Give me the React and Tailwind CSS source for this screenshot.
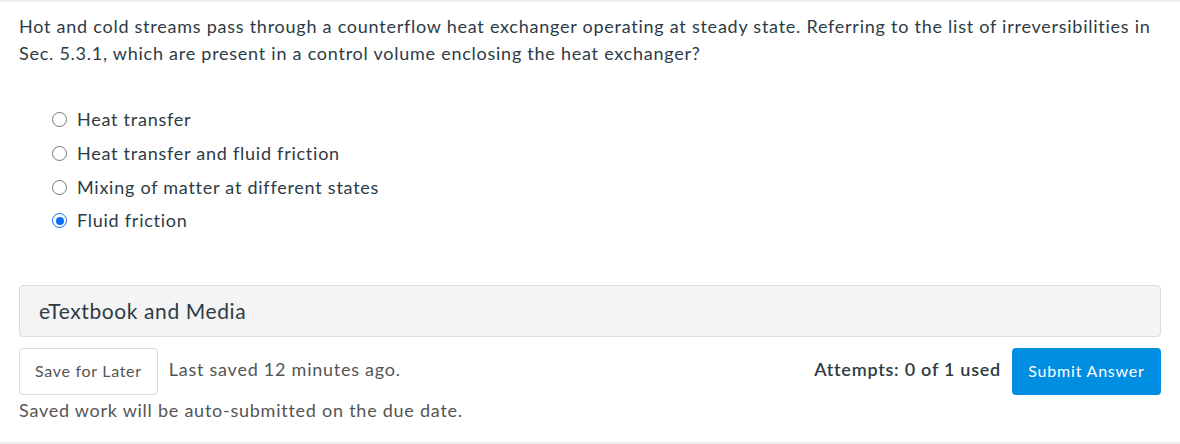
import React from 'react';

const options = [
    'Heat transfer',
    'Heat transfer and fluid friction',
    'Mixing of matter at different states',
    'Fluid friction',
];

const Radio = ({ checked }) =>
    checked ? (
        <span className="flex h-[15px] w-[15px] items-center justify-center rounded-full border-[1.5px] border-[#0a6ef5] bg-white">
            <span className="h-[8px] w-[8px] rounded-full bg-[#0a6ef5]" />
        </span>
    ) : (
        <span className="h-[15px] w-[15px] rounded-full border border-[#767676] bg-white" />
    );

export default function App() {
    return (
        <div className="h-[444px] w-[1180px] border-y-2 border-[#ececec] bg-white font-['Lato','Liberation_Sans',sans-serif] tracking-[0.75px] text-[#2d3b45]">
            {/* Question */}
            <div className="px-[19px] pt-[11px]">
                <p className="text-[18px] leading-[27px]">
                    Hot and cold streams pass through a counterflow heat exchanger operating at steady state. Referring to the list of irreversibilities in Sec. 5.3.1, which are present in a control volume enclosing the heat exchanger?
                </p>

                <div className="mt-[36px] flex flex-col pl-[33px]">
                    {options.map((o, i) => (
                        <label key={o} className="flex h-[33.7px] items-center gap-[10px] text-[18px]">
                            <Radio checked={i === 3} />
                            <span>{o}</span>
                        </label>
                    ))}
                </div>

                {/* Media panel */}
                <div className="mt-[47px] flex h-[52px] items-center rounded border border-[#dcdcdc] bg-[#f4f4f4] px-[19px] text-[21px] tracking-[0.6px] text-[#2d3b45]">
                    eTextbook and Media
                </div>

                {/* Actions */}
                <div className="mt-[11px] flex items-start justify-between">
                    <div className="flex items-start">
                        <button className="h-[47px] rounded border border-[#dcdcdc] bg-white px-[15px] text-[16px] tracking-[0.7px] text-[#555]">
                            Save for Later
                        </button>
                        <span className="ml-[11px] mt-[8px] text-[18px] text-[#555]">Last saved 12 minutes ago.</span>
                    </div>
                    <div className="flex items-start">
                        <span className="mr-[11px] mt-[8px] text-[18px] font-semibold">Attempts: 0 of 1 used</span>
                        <button className="h-[47px] w-[149px] rounded bg-[#008ee2] text-[16px] tracking-[0.8px] text-white">
                            Submit Answer
                        </button>
                    </div>
                </div>
                <p className="mt-[2px] text-[18px] text-[#555]">Saved work will be auto-submitted on the due date.</p>
            </div>
        </div>
    );
}
